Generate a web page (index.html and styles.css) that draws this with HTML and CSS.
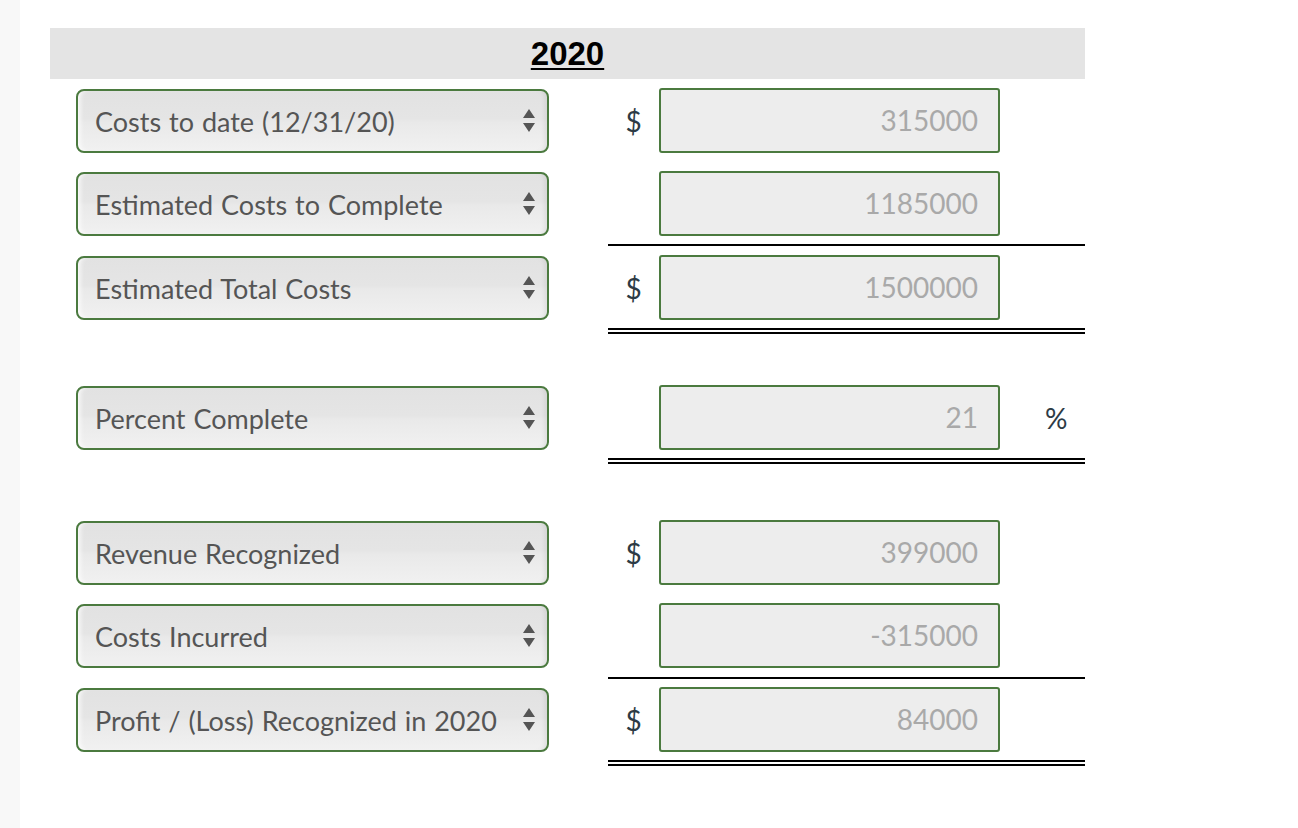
FILE: index.html
```html
<!DOCTYPE html>
<html lang="en">
<head>
<meta charset="utf-8">
<title>2020</title>
<link rel="stylesheet" href="styles.css">
</head>
<body>
<div class="page">
  <div class="strip"></div>
  <main class="sheet">
    <div class="head"><span class="year">2020</span></div>

    <div class="row g10">
      <div class="sel"><span class="label">Costs to date (12/31/20)</span><svg class="arr" width="14" height="26" viewBox="0 0 14 26"><path d="M7 1 L13 10 L1 10 Z M1 15 L13 15 L7 24 Z" fill="#555"/></svg></div>
      <div class="amt"><span class="cur">$</span><input class="num" type="text" value="315000" readonly><span class="pct"></span></div>
    </div>

    <div class="row g19">
      <div class="sel"><span class="label">Estimated Costs to Complete</span><svg class="arr" width="14" height="26" viewBox="0 0 14 26"><path d="M7 1 L13 10 L1 10 Z M1 15 L13 15 L7 24 Z" fill="#555"/></svg></div>
      <div class="amt"><span class="cur"></span><input class="num" type="text" value="1185000" readonly><span class="pct"></span></div>
    </div>
    <div class="rule g8"></div>

    <div class="row g10">
      <div class="sel"><span class="label">Estimated Total Costs</span><svg class="arr" width="14" height="26" viewBox="0 0 14 26"><path d="M7 1 L13 10 L1 10 Z M1 15 L13 15 L7 24 Z" fill="#555"/></svg></div>
      <div class="amt"><span class="cur">$</span><input class="num" type="text" value="1500000" readonly><span class="pct"></span></div>
    </div>
    <div class="rule dbl g8"></div>

    <div class="row g52">
      <div class="sel"><span class="label">Percent Complete</span><svg class="arr" width="14" height="26" viewBox="0 0 14 26"><path d="M7 1 L13 10 L1 10 Z M1 15 L13 15 L7 24 Z" fill="#555"/></svg></div>
      <div class="amt"><span class="cur"></span><input class="num" type="text" value="21" readonly><span class="pct">%</span></div>
    </div>
    <div class="rule dbl g8"></div>

    <div class="row g57">
      <div class="sel"><span class="label">Revenue Recognized</span><svg class="arr" width="14" height="26" viewBox="0 0 14 26"><path d="M7 1 L13 10 L1 10 Z M1 15 L13 15 L7 24 Z" fill="#555"/></svg></div>
      <div class="amt"><span class="cur">$</span><input class="num" type="text" value="399000" readonly><span class="pct"></span></div>
    </div>

    <div class="row g19">
      <div class="sel"><span class="label">Costs Incurred</span><svg class="arr" width="14" height="26" viewBox="0 0 14 26"><path d="M7 1 L13 10 L1 10 Z M1 15 L13 15 L7 24 Z" fill="#555"/></svg></div>
      <div class="amt"><span class="cur"></span><input class="num" type="text" value="-315000" readonly><span class="pct"></span></div>
    </div>
    <div class="rule g9"></div>

    <div class="row g9">
      <div class="sel"><span class="label">Profit / (Loss) Recognized in 2020</span><svg class="arr" width="14" height="26" viewBox="0 0 14 26"><path d="M7 1 L13 10 L1 10 Z M1 15 L13 15 L7 24 Z" fill="#555"/></svg></div>
      <div class="amt"><span class="cur">$</span><input class="num" type="text" value="84000" readonly><span class="pct"></span></div>
    </div>
    <div class="rule dbl g8"></div>
  </main>
</div>
</body>
</html>
```

FILE: styles.css
```css
html, body {
  margin: 0;
  padding: 0;
  background: #ffffff;
}

body {
  font-family: Lato, "Open Sans", sans-serif;
  color: #2d3b45;
}

.page {
  display: flex;
  min-height: 828px;
}

.strip {
  width: 20px;
  flex: 0 0 20px;
  background: #f8f8f8;
}

.sheet {
  padding: 28px 0 0 30px;
  width: 1035px;
}

.head {
  height: 51px;
  background: #e4e4e4;
  display: flex;
  align-items: center;
  justify-content: center;
}

.year {
  font-family: "Liberation Sans", Arial, sans-serif;
  font-weight: bold;
  font-size: 33px;
  color: #000;
  text-decoration: underline;
  text-decoration-thickness: 2px;
  text-underline-offset: 3px;
}

.row {
  display: grid;
  grid-template-columns: 473px 477px;
  column-gap: 59px;
  padding-left: 26px;
  height: 64px;
}

.g8 { margin-top: 8px; }
.g9 { margin-top: 9px; }
.g10 { margin-top: 10px; }
.g19 { margin-top: 19px; }
.g52 { margin-top: 52px; }
.g57 { margin-top: 57px; }

.sel {
  box-sizing: border-box;
  height: 64px;
  border: 2px solid #4b7a3f;
  border-radius: 8px;
  background: linear-gradient(to bottom, #e2e2e2 0%, #e5e5e5 46%, #e9e9e9 52%, #f1f1f1 100%);
  box-shadow: inset 5px 0 5px -3px rgba(255,255,255,0.9), inset -5px 0 5px -3px rgba(0,0,0,0.08);
  display: flex;
  align-items: center;
  justify-content: space-between;
  padding: 0 11px 0 17px;
}

.label {
  font-size: 27px;
  word-spacing: 1px;
  color: #555555;
  white-space: nowrap;
}

.arr {
  display: block;
  flex: 0 0 auto;
}

.amt {
  display: flex;
  align-items: center;
  height: 64px;
}

.cur {
  width: 51px;
  flex: 0 0 51px;
  text-align: center;
  font-size: 28px;
  color: #2d3b45;
}

.num {
  -webkit-appearance: none;
  appearance: none;
  box-sizing: border-box;
  width: 341px;
  height: 65px;
  margin: -2px 0 0 0;
  border: 2px solid #4b7a3f;
  border-radius: 3px;
  background: #ededed;
  text-align: right;
  padding: 0 20px 0 10px;
  font-family: Lato, "Open Sans", sans-serif;
  font-size: 28px;
  color: #a9a9a9;
  outline: none;
}

.pct {
  flex: 1 1 auto;
  padding-left: 45px;
  font-size: 28px;
  color: #2d3b45;
}

.rule {
  margin-left: 558px;
  width: 477px;
  border-top: 2px solid #000;
}

.rule.dbl {
  border-top: 6px double #000;
}
```
